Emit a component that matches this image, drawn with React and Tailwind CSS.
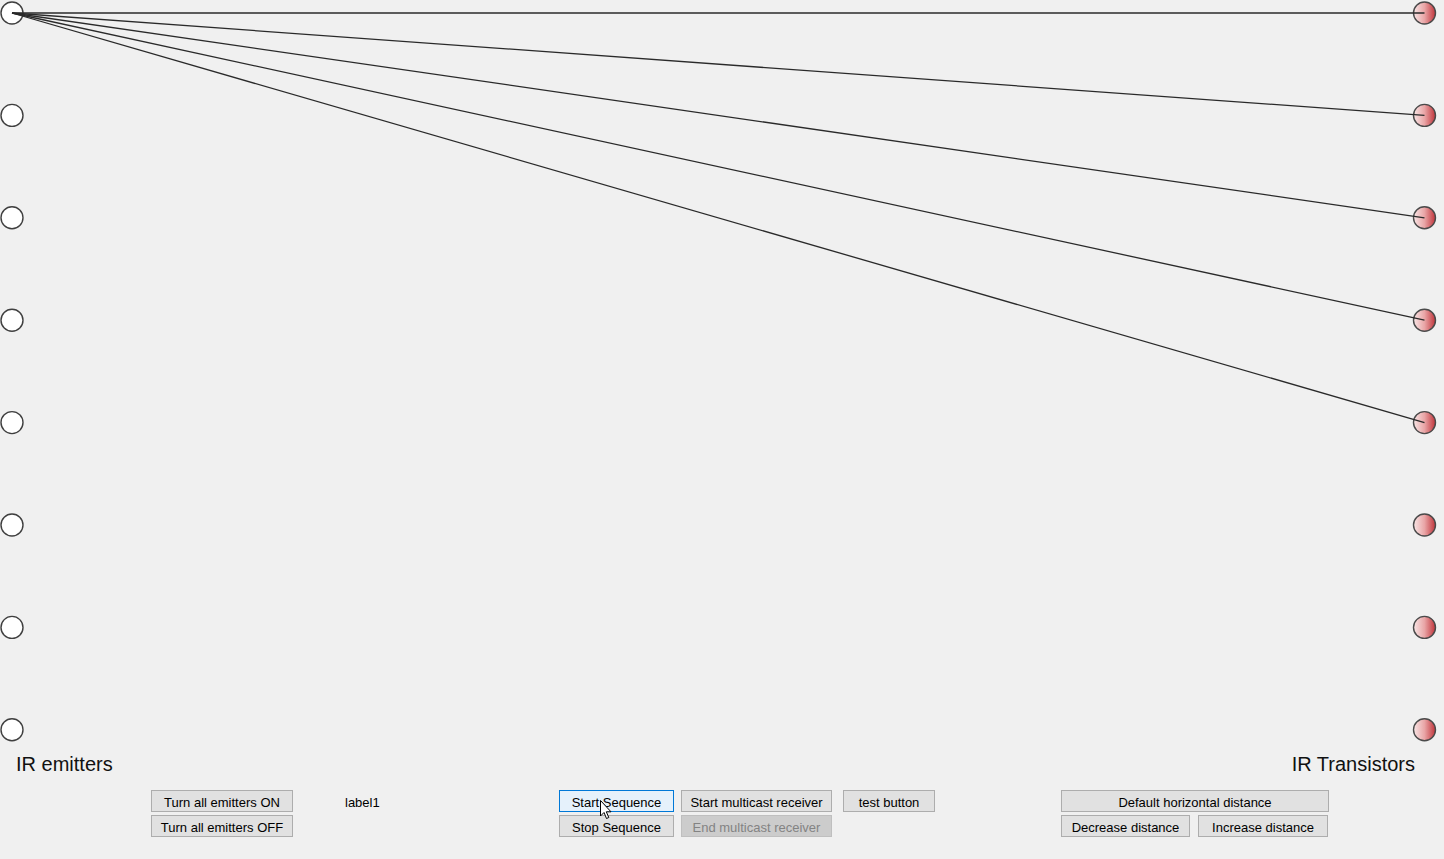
import React from "react";

const ys = [13, 115.4, 217.8, 320.2, 422.6, 525, 627.4, 729.8];
const LX = 12;
const RX = 1424.5;

function Btn({ w, children, variant = "normal" }) {
  const base =
    "h-[22px] pt-[2px] flex items-center justify-center border text-[13px] leading-none whitespace-nowrap";
  const styles = {
    normal: "border-[#adadad] bg-[#e1e1e1] text-black",
    focus: "border-[#0078d7] bg-[#e5f1fb] text-black",
    disabled: "border-[#bfbfbf] bg-[#cccccc] text-[#838383]",
  };
  return (
    <div className={`${base} ${styles[variant]}`} style={{ width: w }}>
      {children}
    </div>
  );
}

export default function App() {
  return (
    <div
      className="relative w-[1444px] h-[859px] overflow-hidden bg-[#f0f0f0]"
      style={{ fontFamily: '"Liberation Sans", Arial, sans-serif' }}
    >
      <svg width="1444" height="750" className="block">
        <defs>
          <linearGradient id="red" x1="0" y1="0" x2="1" y2="0">
            <stop offset="0" stopColor="#f8e6e6" />
            <stop offset="0.5" stopColor="#e9a5a6" />
            <stop offset="1" stopColor="#c0333a" />
          </linearGradient>
        </defs>
        {ys.map((y, i) => (
          <circle key={"l" + i} cx={LX} cy={y} r="11" fill="#ffffff" stroke="#3f3f3f" strokeWidth="1.4" />
        ))}
        {ys.map((y, i) => (
          <circle key={"r" + i} cx={RX} cy={y} r="11" fill="url(#red)" stroke="#4a4a4a" strokeWidth="1.4" />
        ))}
        {ys.slice(0, 5).map((y, i) => (
          <line key={"ln" + i} x1={LX} y1={13} x2={RX} y2={y} stroke="#2a2a2a" strokeWidth="1.3" />
        ))}
      </svg>

      <div className="h-[40px] pt-[3px] flex items-start justify-between pl-[16px] pr-[29px] text-[20px] leading-[23px] text-[#111]">
        <span>IR emitters</span>
        <span>IR Transistors</span>
      </div>

      <div className="flex items-start">
        <div className="ml-[151px] flex flex-col gap-[3px]">
          <Btn w={142}>Turn all emitters ON</Btn>
          <Btn w={142}>Turn all emitters OFF</Btn>
        </div>
        <div className="w-[266px] pl-[52px] pt-[3px] h-[22px] flex items-center text-[13px] text-black">
          label1
        </div>
        <div className="flex flex-col gap-[3px]">
          <Btn w={115} variant="focus">Start Sequence</Btn>
          <Btn w={115}>Stop Sequence</Btn>
        </div>
        <div className="ml-[7px] flex flex-col gap-[3px]">
          <Btn w={151}>Start multicast receiver</Btn>
          <Btn w={151} variant="disabled">End multicast receiver</Btn>
        </div>
        <div className="ml-[11px] flex flex-col gap-[3px]">
          <Btn w={92}>test button</Btn>
        </div>
        <div className="ml-[126px] flex flex-col gap-[3px]">
          <Btn w={268}>Default horizontal distance</Btn>
          <div className="flex gap-[8px]">
            <Btn w={129}>Decrease distance</Btn>
            <Btn w={130}>Increase distance</Btn>
          </div>
        </div>
      </div>

      <svg className="absolute left-[600px] top-[800px]" width="12" height="20" viewBox="0 0 12 20">
        <path d="M0.5 0.5 L0.5 16 L4 12.5 L6.5 18.5 L8.8 17.5 L6.3 11.8 L11 11.8 Z" fill="#ffffff" stroke="#000000" strokeWidth="1" strokeLinejoin="round" />
      </svg>
    </div>
  );
}
